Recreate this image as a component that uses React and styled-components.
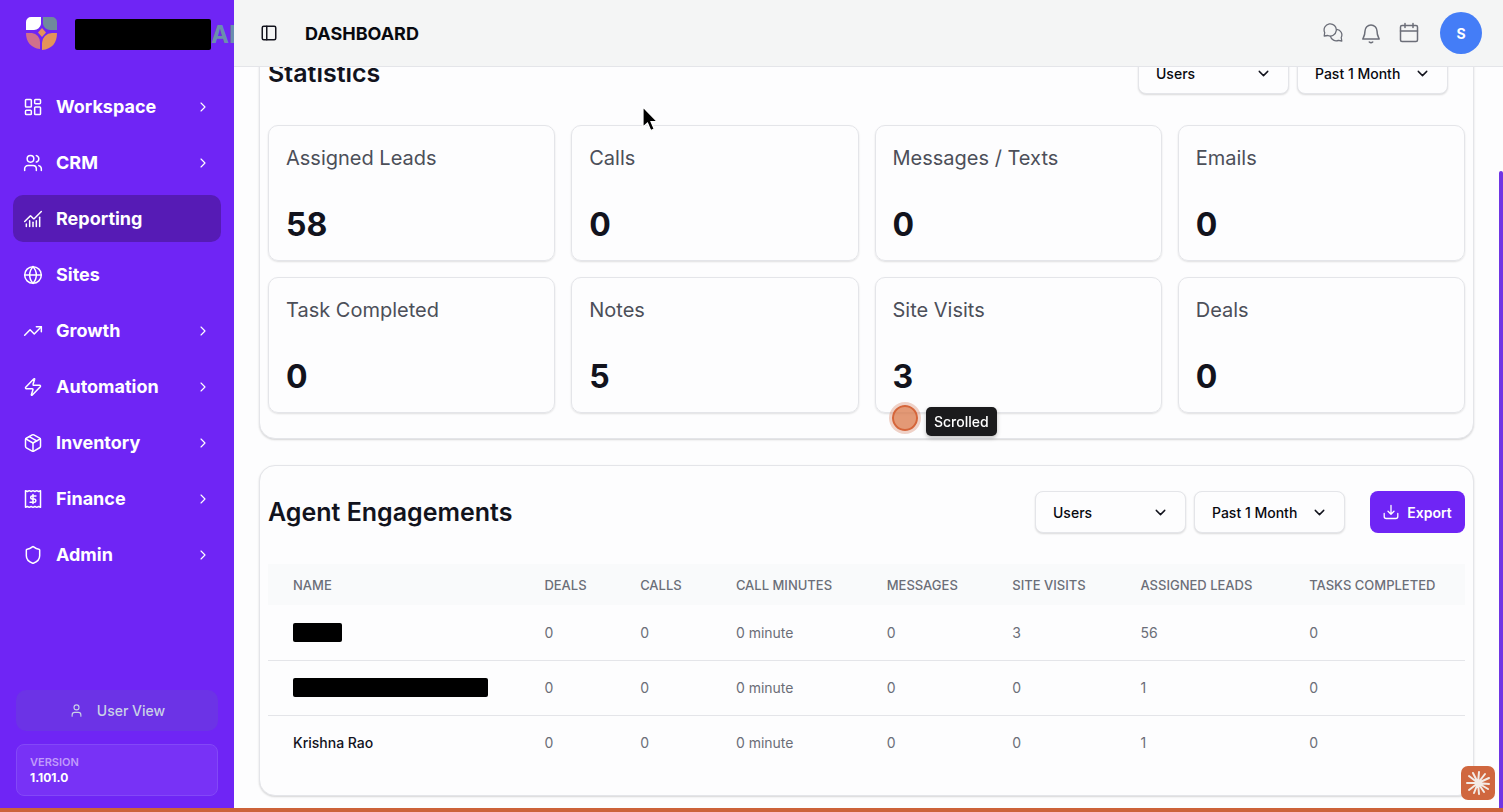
import React, { useLayoutEffect, useRef } from 'react';
import styled, { createGlobalStyle } from 'styled-components';
import {
  ChartNoAxesCombined,
  ChevronDown,
  ChevronRight,
  Globe,
  LayoutDashboard,
  Package,
  PanelLeft,
  Shield,
  TrendingUp,
  User,
  Users,
  Zap,
} from 'lucide-react';

const colors = {
  purple: '#6f25f5',
  purpleDark: '#561bb5',
  orange: '#cc6239',
  border: '#e4e5e9',
  ink: '#12131d',
  muted: '#6b6e78',
};

const GlobalStyle = createGlobalStyle`
  * {
    box-sizing: border-box;
  }
  body {
    margin: 0;
    font-family: Inter, 'Liberation Sans', sans-serif;
    color: ${colors.ink};
    background: #fdfdfe;
  }
  button, select {
    font-family: inherit;
  }
`;

const Shell = styled.div`
  display: flex;
  height: 100vh;
  border-bottom: 4px solid ${colors.orange};
`;

const Sidebar = styled.aside`
  display: flex;
  flex-direction: column;
  flex: none;
  width: 234px;
  padding: 0 13px 12px;
  overflow: hidden;
  color: #fff;
  background: ${colors.purple};
`;

const Brand = styled.div`
  display: flex;
  align-items: center;
  gap: 15px;
  flex: none;
  height: 68px;
  margin-bottom: 15px;
  padding-left: 11px;
  font-size: 24px;
  font-weight: 700;
  color: #6a8fac;
`;

const BrandMark = styled.svg`
  flex: none;
`;

const BrandName = styled.span`
  display: flex;
  align-items: center;
`;

const Redacted = styled.span`
  display: inline-block;
  flex: none;
  width: ${(props) => props.$width}px;
  height: ${(props) => props.$height || 19}px;
  border-radius: 2px;
  background: #000;
  vertical-align: middle;
`;

const Nav = styled.nav`
  display: flex;
  flex-direction: column;
  gap: 9px;
  flex: 1;
`;

const NavLink = styled.a`
  display: flex;
  align-items: center;
  gap: 13px;
  height: 47px;
  padding: 0 10px;
  border-radius: 10px;
  color: #fff;
  font-size: 18px;
  font-weight: 700;
  text-decoration: none;
  background: ${(props) => (props.$active ? colors.purpleDark : 'transparent')};

  span {
    flex: 1;
  }
`;

const SidebarFooter = styled.div`
  display: flex;
  flex-direction: column;
  gap: 13px;
  padding: 0 3px;
`;

const UserViewButton = styled.button`
  display: flex;
  align-items: center;
  justify-content: center;
  gap: 13px;
  height: 41px;
  border: 0;
  border-radius: 10px;
  color: #c9d2e6;
  font-size: 14px;
  font-weight: 500;
  background: #6c33e6;
`;

const VersionBox = styled.div`
  padding: 9px 13px;
  border: 1px solid #8348f7;
  border-radius: 8px;
  font-size: 12px;
  font-weight: 700;
  line-height: 16px;
  background: #7832f6;
`;

const VersionLabel = styled.div`
  color: #c09bfb;
  font-size: 11px;
  font-weight: 600;
`;

const Main = styled.div`
  display: flex;
  flex-direction: column;
  flex: 1;
  min-width: 0;
`;

const Header = styled.header`
  display: flex;
  align-items: center;
  flex: none;
  height: 67px;
  padding: 0 21px 0 26px;
  border-bottom: 1px solid ${colors.border};
  background: #f4f5f5;
`;

const IconButton = styled.button`
  display: flex;
  padding: 0;
  border: 0;
  color: ${(props) => props.$color || colors.muted};
  background: none;
`;

const PageTitle = styled.h1`
  flex: 1;
  margin: 0 0 0 27px;
  font-size: 18px;
  font-weight: 700;
  color: #08090f;
`;

const HeaderActions = styled.div`
  display: flex;
  align-items: center;
  gap: 18px;
`;

const Avatar = styled.button`
  width: 42px;
  height: 42px;
  margin-left: 3px;
  border: 0;
  border-radius: 50%;
  color: #fff;
  font-size: 14px;
  font-weight: 700;
  background: #447df7;
`;

const ScrollArea = styled.div`
  display: flex;
  flex: 1;
  min-height: 0;
`;

const Scroller = styled.main`
  display: flex;
  flex-direction: column;
  gap: 26px;
  flex: 1;
  min-width: 0;
  padding: 78px 25px 12px;
  overflow-y: auto;
  scrollbar-width: none;
`;

const ScrollRail = styled.div`
  display: flex;
  flex-direction: column;
  justify-content: flex-end;
  flex: none;
  width: 4px;
`;

const ScrollThumb = styled.div`
  height: 86%;
  border-radius: 2px 2px 0 0;
  background: #6f35e4;
`;

const Panel = styled.section`
  flex: none;
  padding: 25px 8px;
  border: 1px solid ${colors.border};
  border-radius: 16px;
  background: #fdfdfe;
  box-shadow: 0 1px 2px rgba(0, 0, 0, 0.16);
`;

const PanelHead = styled.div`
  display: flex;
  align-items: center;
  gap: 8px;
  padding-right: ${(props) => props.$inset || 0}px;
  margin-bottom: 31px;
`;

const PanelTitle = styled.h2`
  flex: 1;
  margin: 0;
  font-size: 25px;
  font-weight: 600;
  line-height: 30px;
`;

const SelectWrap = styled.label`
  display: grid;
  align-items: center;
  width: 151px;

  select,
  svg {
    grid-area: 1 / 1;
  }
  svg {
    justify-self: end;
    margin-right: 17px;
    pointer-events: none;
  }
`;

const Select = styled.select`
  appearance: none;
  width: 100%;
  height: 42px;
  padding: 0 17px;
  border: 1px solid ${colors.border};
  border-radius: 8px;
  color: #08090f;
  font-size: 14px;
  font-weight: 500;
  background: #fdfdfe;
  box-shadow: 0 1px 2px rgba(0, 0, 0, 0.14);
`;

const ExportButton = styled.button`
  display: flex;
  align-items: center;
  justify-content: center;
  gap: 8px;
  width: 95px;
  height: 42px;
  margin-left: 17px;
  padding: 0;
  border: 0;
  border-radius: 8px;
  color: #fff;
  font-size: 14px;
  font-weight: 600;
  background: ${colors.purple};
`;

const StatGrid = styled.div`
  display: grid;
  grid-template-columns: repeat(4, 1fr);
  gap: 16px;
`;

const StatCard = styled.div`
  display: flex;
  flex-direction: column;
  justify-content: space-between;
  height: 136px;
  padding: 18px 17px 15px;
  border: 1px solid ${colors.border};
  border-radius: 10px;
  box-shadow: 0 1px 2px rgba(0, 0, 0, 0.12);
`;

const StatLabel = styled.div`
  color: #4c4f59;
  font-size: 20px;
  line-height: 28px;
`;

const StatValue = styled.div`
  font-size: 32px;
  font-weight: 700;
  line-height: 40px;
`;

const Table = styled.table`
  width: 100%;
  border-collapse: collapse;
  table-layout: fixed;
  text-align: left;

  th {
    height: 41px;
    padding: 0 0 0 25px;
    color: ${colors.muted};
    font-size: 13px;
    font-weight: 500;
    text-transform: uppercase;
    white-space: nowrap;
    background: #f9fafb;
  }
  td {
    height: 55px;
    padding: 0 0 0 25px;
    color: ${colors.muted};
    font-size: 14px;
  }
  tbody tr + tr {
    border-top: 1px solid ${colors.border};
  }
  td:first-child {
    color: ${colors.ink};
    font-weight: 500;
  }
`;

const Pointer = styled.svg`
  position: fixed;
  left: 641px;
  top: 105px;
`;

const ClickMark = styled.div`
  position: fixed;
  left: 892px;
  top: 405px;
  width: 26px;
  height: 26px;
  border: 2px solid #d5653a;
  border-radius: 50%;
  background: rgba(217, 119, 72, 0.75);
  box-shadow: 0 0 0 3px rgba(204, 98, 57, 0.28);
`;

const ActionTip = styled.div`
  position: fixed;
  left: 926px;
  top: 407px;
  padding: 5px 8px;
  border-radius: 5px;
  color: #fff;
  font-size: 14px;
  line-height: 19px;
  font-weight: 500;
  background: #1b1b1d;
  box-shadow: 0 2px 4px rgba(0, 0, 0, 0.25);
`;

const AssistantBadge = styled.svg`
  position: fixed;
  right: 8px;
  bottom: 12px;
`;

const navItems = [
  { label: 'Workspace', Icon: LayoutDashboard, more: true },
  { label: 'CRM', Icon: Users, more: true },
  { label: 'Reporting', Icon: ChartNoAxesCombined, active: true },
  { label: 'Sites', Icon: Globe },
  { label: 'Growth', Icon: TrendingUp, more: true },
  { label: 'Automation', Icon: Zap, more: true },
  { label: 'Inventory', Icon: Package, more: true },
  { label: 'Finance', Icon: InvoiceIcon, more: true },
  { label: 'Admin', Icon: Shield, more: true },
];

const stats = [
  { label: 'Assigned Leads', value: 58 },
  { label: 'Calls', value: 0 },
  { label: 'Messages / Texts', value: 0 },
  { label: 'Emails', value: 0 },
  { label: 'Task Completed', value: 0 },
  { label: 'Notes', value: 5 },
  { label: 'Site Visits', value: 3 },
  { label: 'Deals', value: 0 },
];

const columns = [
  { label: 'Name', width: '21%' },
  { label: 'Deals', width: '8%' },
  { label: 'Calls', width: '8%' },
  { label: 'Call Minutes', width: '12.6%' },
  { label: 'Messages', width: '10.5%' },
  { label: 'Site Visits', width: '10.7%' },
  { label: 'Assigned Leads', width: '14.1%' },
  { label: 'Tasks Completed', width: '15.1%' },
];

const agents = [
  { id: 1, hidden: 49, cells: ['0', '0', '0 minute', '0', '3', '56', '0'] },
  { id: 2, hidden: 195, cells: ['0', '0', '0 minute', '0', '0', '1', '0'] },
  { id: 3, name: 'Krishna Rao', cells: ['0', '0', '0 minute', '0', '0', '1', '0'] },
];

function InvoiceIcon({ size = 24, strokeWidth = 2 }) {
  return (
    <svg width={size} height={size} viewBox="0 0 24 24" fill="none" stroke="currentColor" strokeWidth={strokeWidth} strokeLinecap="round" strokeLinejoin="round">
      <path d="M3 2v20l2.250-1 2.250 1 2.250-1L12 22l2.250-1 2.250 1 2.250-1L21 22V2l-2.250 1L16.500 2l-2.250 1L12 2 9.750 3 7.500 2 5.250 3z" />
      <path d="M15.500 8.500H11a1.800 1.800 0 0 0 0 3.600h2.500a1.900 1.900 0 0 1 0 3.800H8.500M12 6.500v11" />
    </svg>
  );
}

function Logo() {
  return (
    <BrandMark width="36" height="36" viewBox="0 0 36 36">
      <path d="M7 1h10v7a7 7 0 0 1-7 6H2V6a5 5 0 0 1 5-5z" fill="#fff" />
      <path d="M19 1h9a5 5 0 0 1 5 5v8h-7a7 7 0 0 1-7-6z" fill="#6f8a9c" />
      <path d="M2 17h6a9 9 0 0 1 8 9v7C7 32 2 26 2 17z" fill="#d0708c" />
      <path d="M33 17c0 10-5 16-15 17v-7a10 10 0 0 1 10-10z" fill="#e5935a" />
      <path d="M18 12l4 4.500-4 4.500-4-4.500z" fill="#e5935a" />
    </BrandMark>
  );
}

function ChatIcon() {
  return (
    <svg width="20" height="20" viewBox="0 0 20 20" fill="none" stroke="currentColor" strokeWidth="1.300" strokeLinecap="round" strokeLinejoin="round">
      <path d="M1.200 13l.5-3.500A6.100 6.100 0 1 1 4.800 12.500z" />
      <path d="M13.800 6.300a5.600 5.600 0 0 1 4.400 8.200l.6 3.500-3.400-.7a5.700 5.700 0 0 1-7.900-4" />
    </svg>
  );
}

function BellIcon() {
  return (
    <svg width="20" height="22" viewBox="0 0 20 22" fill="none" stroke="currentColor" strokeWidth="1.500" strokeLinecap="round" strokeLinejoin="round">
      <path d="M10 3a6 6 0 0 0-6 6c0 4-1 5.500-2.200 8h16.400C17 14.500 16 13 16 9a6 6 0 0 0-6-6z" />
      <path d="M8.300 20c1 .8 2.400.8 3.400 0" />
    </svg>
  );
}

function CalendarIcon() {
  return (
    <svg width="20" height="22" viewBox="0 0 20 22" fill="none" stroke="currentColor" strokeWidth="1.500" strokeLinecap="round" strokeLinejoin="round">
      <rect x="1.500" y="3.500" width="17" height="16" rx="1.500" />
      <path d="M1.500 9h17M6 1.500v4M14 1.500v4" />
    </svg>
  );
}

function ExportIcon() {
  return (
    <svg width="16" height="16" viewBox="0 0 16 16" fill="none" stroke="currentColor" strokeWidth="1.300" strokeLinecap="round" strokeLinejoin="round">
      <path d="M8 1.500v8.500M5 7.200l3 3 3-3M1.200 9.500v3a2 2 0 0 0 2 2h9.600a2 2 0 0 0 2-2v-3" />
    </svg>
  );
}

function Dropdown({ label, value }) {
  return (
    <SelectWrap>
      <Select aria-label={label} defaultValue={value}>
        <option>{value}</option>
      </Select>
      <ChevronDown size={17} strokeWidth={2} />
    </SelectWrap>
  );
}

function SideNav() {
  return (
    <Sidebar>
      <Brand>
        <Logo />
        <BrandName>
          <Redacted $width={136} $height={31} />
          AI
        </BrandName>
      </Brand>
      <Nav>
        {navItems.map(({ label, Icon, active, more }) => (
          <NavLink key={label} href="#" $active={active}>
            <Icon size={20} strokeWidth={1.8} />
            <span>{label}</span>
            {more && <ChevronRight size={16} strokeWidth={1.7} />}
          </NavLink>
        ))}
      </Nav>
      <SidebarFooter>
        <UserViewButton type="button">
          <User size={15} strokeWidth={1.8} />
          User View
        </UserViewButton>
        <VersionBox>
          <VersionLabel>VERSION</VersionLabel>
          1.101.0
        </VersionBox>
      </SidebarFooter>
    </Sidebar>
  );
}

function TopBar() {
  return (
    <Header>
      <IconButton type="button" aria-label="Toggle sidebar" $color="#12131d">
        <PanelLeft size={18} strokeWidth={2} />
      </IconButton>
      <PageTitle>DASHBOARD</PageTitle>
      <HeaderActions>
        <IconButton type="button" aria-label="Chat">
          <ChatIcon />
        </IconButton>
        <IconButton type="button" aria-label="Notifications">
          <BellIcon />
        </IconButton>
        <IconButton type="button" aria-label="Calendar">
          <CalendarIcon />
        </IconButton>
        <Avatar type="button">S</Avatar>
      </HeaderActions>
    </Header>
  );
}

function Statistics() {
  return (
    <Panel>
      <PanelHead $inset={17}>
        <PanelTitle>Statistics</PanelTitle>
        <Dropdown label="Statistics users" value="Users" />
        <Dropdown label="Statistics period" value="Past 1 Month" />
      </PanelHead>
      <StatGrid>
        {stats.map((stat) => (
          <StatCard key={stat.label}>
            <StatLabel>{stat.label}</StatLabel>
            <StatValue>{stat.value}</StatValue>
          </StatCard>
        ))}
      </StatGrid>
    </Panel>
  );
}

function AgentEngagements() {
  return (
    <Panel>
      <PanelHead>
        <PanelTitle>Agent Engagements</PanelTitle>
        <Dropdown label="Agent users" value="Users" />
        <Dropdown label="Agent period" value="Past 1 Month" />
        <ExportButton type="button">
          <ExportIcon />
          Export
        </ExportButton>
      </PanelHead>
      <Table>
        <colgroup>
          {columns.map((column) => (
            <col key={column.label} style={{ width: column.width }} />
          ))}
        </colgroup>
        <thead>
          <tr>
            {columns.map((column) => (
              <th key={column.label} scope="col">{column.label}</th>
            ))}
          </tr>
        </thead>
        <tbody>
          {agents.map((agent) => (
            <tr key={agent.id}>
              <td>{agent.name || <Redacted $width={agent.hidden} />}</td>
              {agent.cells.map((cell, i) => (
                <td key={columns[i + 1].label}>{cell}</td>
              ))}
            </tr>
          ))}
        </tbody>
      </Table>
    </Panel>
  );
}

function App() {
  const scroller = useRef(null);

  useLayoutEffect(() => {
    scroller.current.scrollTop = scroller.current.scrollHeight;
  }, []);

  return (
    <>
      <GlobalStyle />
      <Shell>
        <SideNav />
        <Main>
          <TopBar />
          <ScrollArea>
            <Scroller ref={scroller}>
              <Statistics />
              <AgentEngagements />
            </Scroller>
            <ScrollRail>
              <ScrollThumb />
            </ScrollRail>
          </ScrollArea>
        </Main>
      </Shell>
      <Pointer width="20" height="28" viewBox="0 0 20 28">
        <path d="M2 2v20l4.500-4 3.200 7.500 3.500-1.500-3.200-7.300h6.200z" fill="#000" stroke="#fff" strokeWidth="1.200" />
      </Pointer>
      <ClickMark />
      <ActionTip>Scrolled</ActionTip>
      <AssistantBadge width="34" height="34" viewBox="0 0 34 34">
        <rect width="34" height="34" rx="7" fill="#d0673f" />
        <g stroke="#f3ebe6" strokeWidth="2" strokeLinecap="round">
          <path d="M17 17L12 7M17 17l1-11M17 17l7-9M17 17l11-5M17 17l11 1M17 17l10 6M17 17l6 9M17 17l1 11M17 17l-4 10M17 17l-9 7M17 17l-11 0M17 17L8 10" />
        </g>
      </AssistantBadge>
    </>
  );
}

export default App;
